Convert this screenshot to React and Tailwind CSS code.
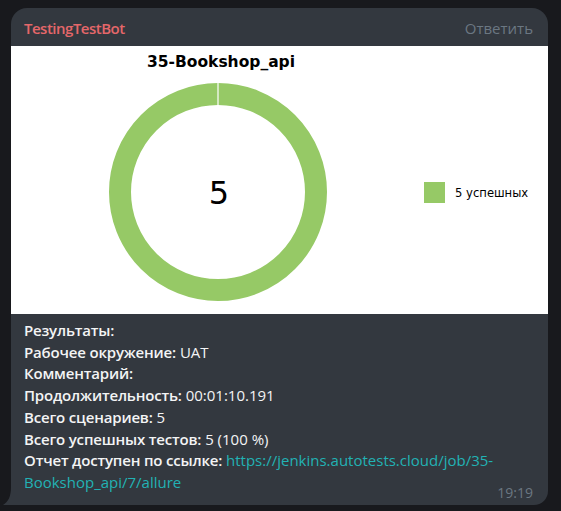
import React from "react";

function Donut() {
  const cx = 207, cy = 146, r = 98;
  return (
    <svg width="537" height="268" viewBox="0 0 537 268" className="block">
      <rect x="0" y="0" width="537" height="268" fill="#ffffff" />
      <text x="210" y="21" textAnchor="middle" fontFamily="'DejaVu Sans', sans-serif" fontWeight="bold" fontSize="15.5" fill="#000">35-Bookshop_api</text>
      <circle cx={cx} cy={cy} r={r} fill="none" stroke="#96c966" strokeWidth="22" />
      <line x1={cx} y1={cy - r - 12} x2={cx} y2={cy - r + 12} stroke="#ffffff" strokeWidth="1.2" />
      <text x={cx + 1} y={cy + 12} textAnchor="middle" fontFamily="'DejaVu Sans', sans-serif" fontSize="32" fill="#000">5</text>
      <rect x="413" y="136" width="21" height="21" fill="#96c966" />
      <text x="444" y="151" fontFamily="'DejaVu Sans', sans-serif" fontSize="11.6" fill="#000">5 успешных</text>
    </svg>
  );
}

export default function App() {
  const lines = [
    ["Результаты:", ""],
    ["Рабочее окружение:", " UAT"],
    ["Комментарий:", ""],
    ["Продолжительность:", " 00:01:10.191"],
    ["Всего сценариев:", " 5"],
    ["Всего успешных тестов:", " 5 (100 %)"],
  ];
  return (
    <div className="w-[561px] h-[511px] bg-[#18191d] pt-[8px] pl-[11px]" style={{ fontFamily: "'Open Sans', sans-serif" }}>
      <div className="relative w-[537px] h-[497px] bg-[#33383f] rounded-t-[16px] rounded-br-[14px]">
        <svg className="absolute left-[-8px] bottom-0" width="10" height="18" viewBox="0 0 10 18">
          <path d="M8 0 C8 10 5 15 0 18 L10 18 L10 0 Z" fill="#33383f" />
        </svg>
        <div className="h-[38px] flex items-center justify-between pl-[13px] pr-[15px]">
          <span className="text-[#e5676a] text-[15px] font-semibold leading-none pt-[3px] tracking-[-0.5px]">TestingTestBot</span>
          <span className="text-[#6b7782] text-[15px] leading-none pt-[2px]">Ответить</span>
        </div>
        <Donut />
        <div className="pl-[13px] pr-[15px] pt-[6px] text-[#f3f4f5] text-[15px] leading-[21.7px]">
          {lines.map(([b, v], i) => (
            <div key={i}>
              <span className="font-semibold tracking-[-0.18px]">{b}</span>
              <span>{v}</span>
            </div>
          ))}
          <div>
            <span className="font-semibold tracking-[-0.18px]">Отчет доступен по ссылке:</span>{" "}
            <span className="text-[#22b2b4]">https://jenkins.autotests.cloud/job/35-Bookshop_api/7/allure</span>
          </div>
        </div>
        <span className="absolute right-[15px] bottom-[5px] text-[#6b7782] text-[14px] leading-none">19:19</span>
      </div>
    </div>
  );
}
